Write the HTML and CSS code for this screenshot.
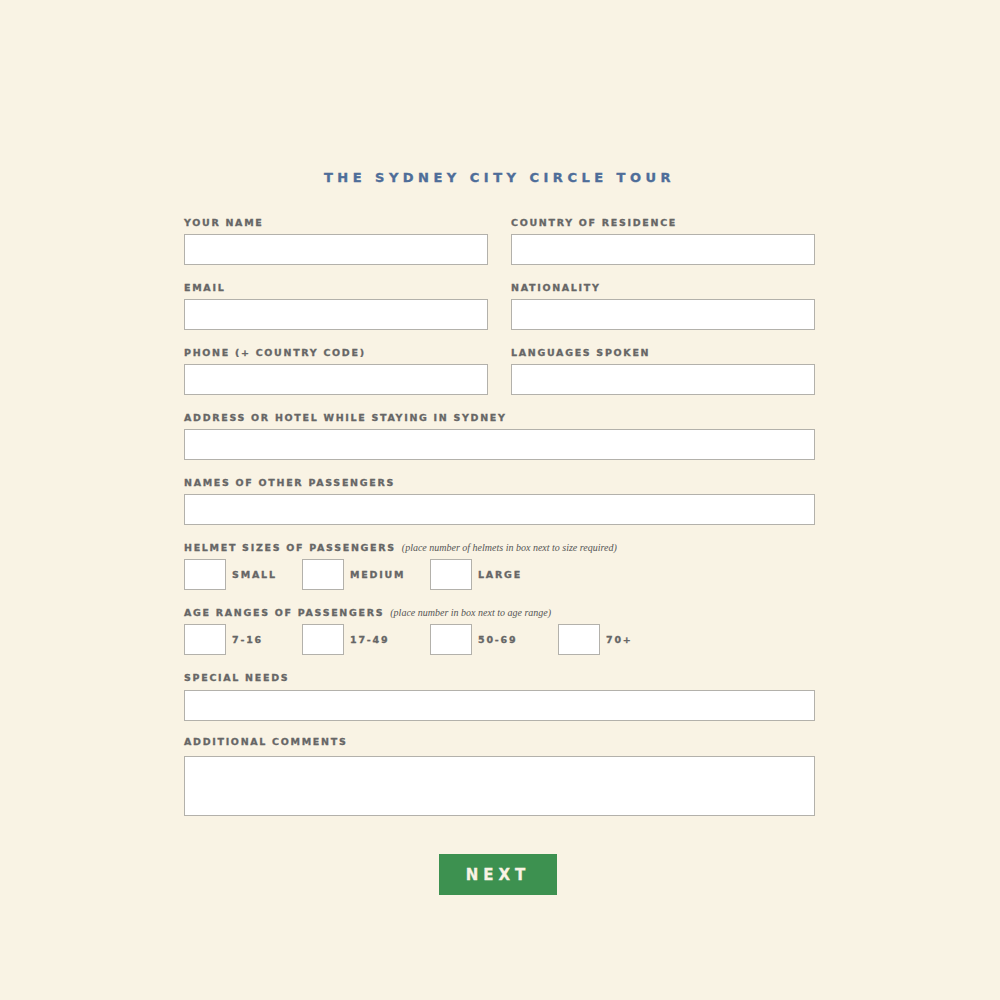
FILE: index.html
```html
<!DOCTYPE html>
<html>
<head>
<meta charset="utf-8">
<link rel="stylesheet" href="styles.css">
</head>
<body>
<form class="tour-form">
  <h1 class="title">THE SYDNEY CITY CIRCLE TOUR</h1>
  <div class="row two">
    <div class="field"><label class="lbl">YOUR NAME</label><input class="box" type="text"></div>
    <div class="field"><label class="lbl">COUNTRY OF RESIDENCE</label><input class="box" type="text"></div>
  </div>
  <div class="row two">
    <div class="field"><label class="lbl">EMAIL</label><input class="box" type="text"></div>
    <div class="field"><label class="lbl">NATIONALITY</label><input class="box" type="text"></div>
  </div>
  <div class="row two">
    <div class="field"><label class="lbl">PHONE (+ COUNTRY CODE)</label><input class="box" type="text"></div>
    <div class="field"><label class="lbl">LANGUAGES SPOKEN</label><input class="box" type="text"></div>
  </div>
  <div class="row">
    <div class="field"><label class="lbl">ADDRESS OR HOTEL WHILE STAYING IN SYDNEY</label><input class="box" type="text"></div>
  </div>
  <div class="row">
    <div class="field"><label class="lbl">NAMES OF OTHER PASSENGERS</label><input class="box" type="text"></div>
  </div>
  <div class="row">
    <div class="field">
      <label class="lbl">HELMET SIZES OF PASSENGERS <span class="note">(place number of helmets in box next to size required)</span></label>
      <div class="options">
        <div class="opt first"><input class="box small" type="text"><span class="opt-lbl">SMALL</span></div>
        <div class="opt"><input class="box small" type="text"><span class="opt-lbl">MEDIUM</span></div>
        <div class="opt"><input class="box small" type="text"><span class="opt-lbl">LARGE</span></div>
      </div>
    </div>
  </div>
  <div class="row">
    <div class="field">
      <label class="lbl">AGE RANGES OF PASSENGERS <span class="note">(place number in box next to age range)</span></label>
      <div class="options">
        <div class="opt first"><input class="box small" type="text"><span class="opt-lbl">7-16</span></div>
        <div class="opt"><input class="box small" type="text"><span class="opt-lbl">17-49</span></div>
        <div class="opt"><input class="box small" type="text"><span class="opt-lbl">50-69</span></div>
        <div class="opt"><input class="box small" type="text"><span class="opt-lbl">70+</span></div>
      </div>
    </div>
  </div>
  <div class="row tight">
    <div class="field"><label class="lbl gap6">SPECIAL NEEDS</label><input class="box" type="text"></div>
  </div>
  <div class="row">
    <div class="field"><label class="lbl gap8">ADDITIONAL COMMENTS</label><textarea class="box area"></textarea></div>
  </div>
  <div class="actions"><button class="next" type="button">NEXT</button></div>
</form>
</body>
</html>
```
FILE: styles.css
```css
html, body {
  margin: 0;
  padding: 0;
  background: #f9f3e4;
}
body {
  font-family: "DejaVu Sans", sans-serif;
  color: #666666;
}
.tour-form {
  width: 631px;
  margin: 0 0 0 184px;
  padding-top: 170px;
  display: flex;
  flex-direction: column;
}
.title {
  margin: 0 0 31px 0;
  font-size: 13px;
  line-height: 16px;
  font-weight: bold;
  letter-spacing: 4.5px;
  padding-left: 0;
  color: #4e6d99;
  text-align: center;
  -webkit-text-stroke: 0.35px #4e6d99;
}
.row {
  display: flex;
  gap: 23px;
  margin-bottom: 17px;
}
.row.tight { margin-bottom: 15px; }
.row.two .field { flex: 0 0 304px; }
.field {
  flex: 1;
  display: flex;
  flex-direction: column;
}
.lbl {
  font-size: 9.5px;
  line-height: 12px;
  font-weight: bold;
  letter-spacing: 1.7px;
  color: #666666;
  margin-bottom: 5px;
  white-space: nowrap;
  -webkit-text-stroke: 0.3px #666666;
}
.lbl.gap6 { margin-bottom: 6px; }
.lbl.gap8 { margin-bottom: 8px; }
.note {
  font-family: "Liberation Serif", serif;
  font-style: italic;
  font-weight: normal;
  font-size: 10px;
  letter-spacing: 0;
  color: #555555;
  -webkit-text-stroke: 0;
  margin-left: 1px;
}
.box {
  box-sizing: border-box;
  height: 31px;
  width: 100%;
  margin: 0;
  border: 1px solid #b3b1ab;
  background: #ffffff;
  outline: none;
  padding: 0 6px;
  font-family: "DejaVu Sans", sans-serif;
}
.box.area {
  height: 60px;
  resize: none;
  display: block;
}
.options {
  display: flex;
}
.opt {
  flex: 0 0 128px;
  display: flex;
  align-items: center;
}
.opt.first { flex-basis: 118px; }
.box.small {
  width: 42px;
  flex: 0 0 42px;
}
.opt-lbl {
  margin-left: 6px;
  font-size: 9.5px;
  font-weight: bold;
  letter-spacing: 1.8px;
  color: #666666;
  -webkit-text-stroke: 0.3px #666666;
}
.actions {
  display: flex;
  justify-content: center;
  margin-top: 21px;
  padding-right: 3px;
}
.next {
  width: 118px;
  height: 41px;
  border: none;
  background: #3d9150;
  color: #f9f3e4;
  font-family: "DejaVu Sans", sans-serif;
  font-weight: bold;
  font-size: 15px;
  letter-spacing: 5px;
  padding: 0;
  cursor: pointer;
  -webkit-text-stroke: 0.3px #f9f3e4;
}
```
